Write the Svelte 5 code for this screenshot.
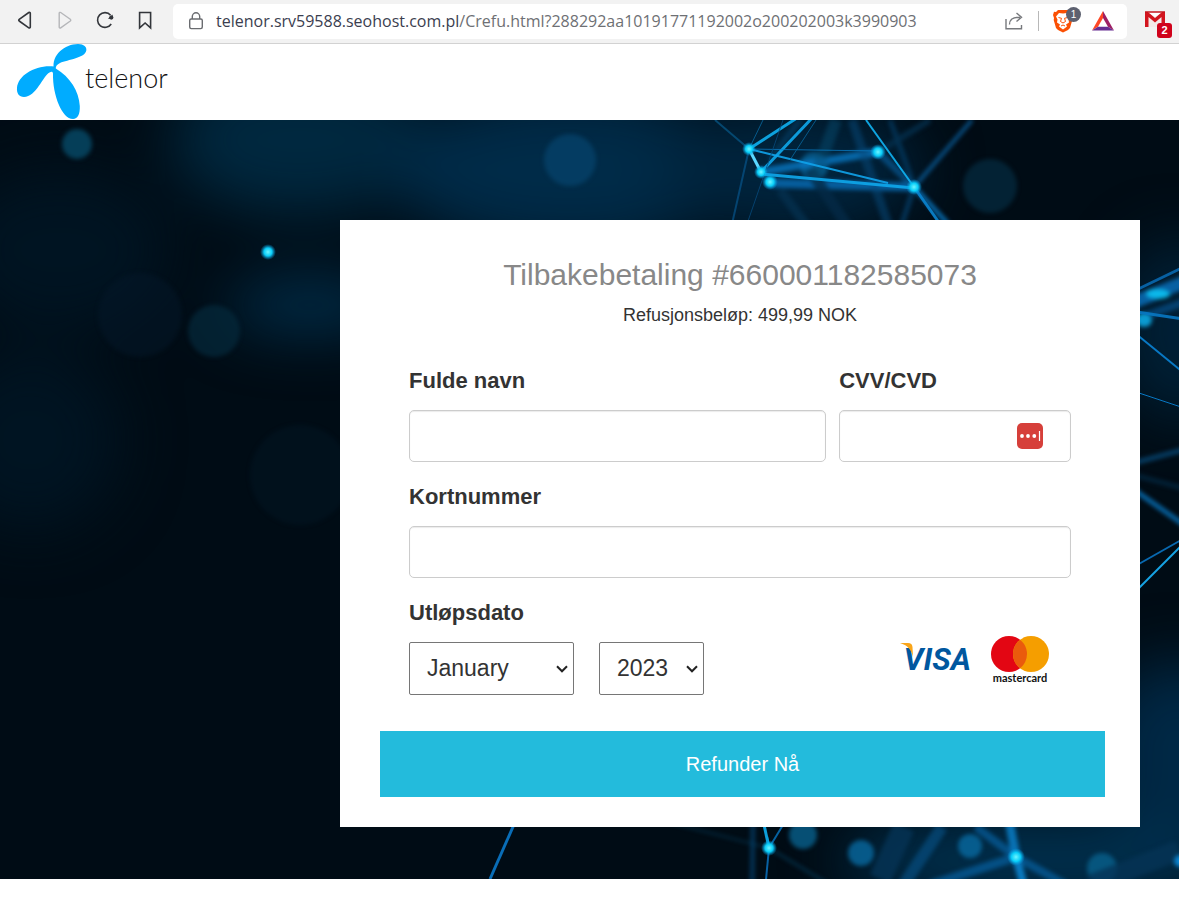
<script>
  const months = ['January', 'February', 'March', 'April', 'May', 'June', 'July', 'August', 'September', 'October', 'November', 'December'];
  const years = [2023, 2024, 2025, 2026, 2027, 2028];

  let month = 'January';
  let year = 2023;

  // x1, y1, x2, y2, width, colour, opacity
  const softLines = [
    [761, 52, 878, 32, 8, '#0878c4', 0.8],
    [770, 63, 914, 67, 9, '#0869b0', 0.85],
    [878, 32, 914, 67, 7, '#075a96', 0.7],
    [852, 0, 890, 110, 9, '#064a7c', 0.5],
    [890, 0, 912, 60, 5, '#075a96', 0.4],
    [914, 67, 972, 0, 4, '#0a6ab0', 0.7],
    [914, 67, 900, 110, 5, '#064a7c', 0.6],
    [914, 67, 948, 104, 5, '#0878c4', 0.8],
    [878, 32, 930, 0, 6, '#04304e', 0.8],
    [780, 70, 810, 110, 9, '#04304e', 0.8],
    [810, 50, 850, 110, 11, '#042a46', 0.8],
    [770, 40, 800, 0, 6, '#053c62', 0.7],
    [814, 60, 836, 0, 12, '#064a6e', 0.5],
    [1134, 182, 1190, 160, 13, '#0869b0', 0.9],
    [1140, 198, 1190, 180, 8, '#06508a', 0.7],
    [1130, 344, 1190, 328, 5, '#053c62', 1],
    [1130, 367, 1190, 409, 5, '#0878c4', 0.8],
    [1130, 354, 1190, 370, 5, '#04304e', 0.6],
    [753, 700, 752, 770, 5, '#064a7c', 0.6],
    [904, 707, 880, 759, 22, '#053456', 0.8],
    [942, 707, 900, 770, 12, '#07548a', 0.6],
    [1016, 737, 930, 765, 9, '#0869b0', 0.6],
    [1016, 737, 976, 707, 8, '#0869b0', 0.6],
    [1016, 737, 1066, 765, 8, '#0869b0', 0.6],
    [1016, 737, 1009, 700, 9, '#0a84d0', 0.8],
    [1016, 737, 1025, 770, 8, '#0a84d0', 0.9],
    [1090, 765, 1179, 730, 20, '#053456', 0.8],
    [660, 700, 769, 728, 2, '#064a6e', 0.5],
    [769, 728, 830, 765, 3, '#064a6e', 0.5]
  ];

  const sharpLines = [
    [749, 29, 800, -4, 3, '#0fb0f0', 0.9],
    [761, 52, 814, -4, 3, '#0fa8ec', 0.9],
    [761, 52, 749, 29, 3, '#5ad8ff', 1],
    [749, 29, 878, 31, 1, '#0a84d0', 0.7],
    [749, 29, 888, 63, 2, '#10a4ec', 0.9],
    [761, 54, 914, 68, 3, '#0fa8ec', 0.9],
    [866, 0, 914, 67, 2, '#10b4f4', 0.9],
    [914, 67, 940, 104, 3, '#0a84d0', 0.9],
    [715, 0, 749, 29, 2, '#075a8a', 0.7],
    [763, 0, 749, 29, 1, '#0869a0', 0.8],
    [749, 29, 732, 104, 2, '#07548a', 0.7],
    [783, 0, 747, 104, 1, '#064a7c', 0.8],
    [816, 0, 790, 40, 1, '#0869a0', 0.8],
    [1130, 173, 1190, 144, 3, '#0869b0', 0.9],
    [1130, 191, 1190, 200, 3, '#0878c4', 0.9],
    [1130, 209, 1190, 258, 2, '#0878c4', 1],
    [1130, 270, 1190, 290, 1, '#0878c4', 1],
    [1130, 449, 1190, 415, 2, '#0869b0', 1],
    [1130, 477, 1190, 417, 2, '#16a4e4', 1],
    [516, 700, 490, 759, 3, '#0a78c8', 0.9],
    [763, 700, 769, 728, 3, '#0fb0f0', 0.9],
    [786, 700, 769, 728, 2, '#0878c4', 0.8],
    [769, 728, 765, 770, 2, '#0a78c8', 0.8]
  ];

  // cx, cy, r, colour, opacity
  const bokeh = [
    [77, 24, 15, '#05445f', 0.9],
    [570, 40, 26, '#05446e', 0.7],
    [140, 195, 42, '#04182a', 0.5],
    [214, 211, 26, '#04293c', 0.7],
    [300, 355, 50, '#031827', 0.4],
    [990, 66, 27, '#04283c', 0.8],
    [814, 46, 14, '#0869a0', 0.7],
    [803, 715, 14, '#07608c', 0.8],
    [861, 733, 13, '#0869a0', 0.8],
    [970, 726, 12, '#0869a0', 0.8],
    [1102, 748, 15, '#07608c', 0.8]
  ];

  const nodes = [
    [749, 29, 5],
    [761, 52, 5],
    [770, 62, 6],
    [878, 32, 6],
    [914, 67, 6],
    [268, 132, 6],
    [769, 728, 6],
    [1016, 737, 7]
  ];
</script>

<div class="toolbar">
  <button class="tool" type="button" aria-label="Back">
    <svg width="20" height="20" viewBox="0 0 20 20"><path d="M15.3 3.2V17c0 .8-.8 1.2-1.5.8L4.2 11c-.6-.5-.6-1.2 0-1.7l9.6-6.8c.7-.4 1.5 0 1.5.7z" fill="none" stroke="#33363b" stroke-width="1.6" /></svg>
  </button>
  <button class="tool" type="button" aria-label="Forward" disabled>
    <svg width="20" height="20" viewBox="0 0 20 20"><path d="M4.2 3.2V17c0 .8.8 1.2 1.5.8l9.6-6.8c.6-.5.6-1.2 0-1.7L5.7 2.5c-.7-.4-1.5 0-1.5.7z" fill="none" stroke="#b5b6b9" stroke-width="1.4" /></svg>
  </button>
  <button class="tool" type="button" aria-label="Reload">
    <svg width="20" height="20" viewBox="0 0 20 20">
      <path d="M16.2 14A7.4 7.4 0 1 1 15.6 5.200" fill="none" stroke="#33363b" stroke-width="1.6" />
      <path d="M17.600 4.500l.3 4.600-5-.3z" fill="#33363b" />
      <circle cx="16.300" cy="7.600" r="2.100" fill="#33363b" />
    </svg>
  </button>
  <button class="tool" type="button" aria-label="Bookmark">
    <svg width="20" height="20" viewBox="0 0 20 20"><path d="M4.600 2.500h11v15.400L10.100 13l-5.500 4.900z" fill="none" stroke="#33363b" stroke-width="1.6" /></svg>
  </button>

  <div class="address">
    <svg class="lock" width="16" height="20" viewBox="0 0 16 20"><rect x="1.700" y="8" width="12.600" height="9.600" rx="1.500" fill="none" stroke="#6a6c70" stroke-width="1.400" /><path d="M4.300 8V5.500a3.700 3.700 0 0 1 7.400 0V8" fill="none" stroke="#6a6c70" stroke-width="1.400" /></svg>
    <span class="url"><b>telenor.srv59588.seohost.com.pl</b>/Crefu.html?288292aa10191771192002o200202003k3990903</span>
    <button class="tool" type="button" aria-label="Share">
      <svg width="20" height="20" viewBox="0 0 20 20"><path d="M2 8v9.700h15.500V14M5.500 13.500c0-5 3-7.300 10.500-7.300M12.500 2l5 4.300-5 4.200" fill="none" stroke="#77797d" stroke-width="1.400" /></svg>
    </button>
    <span class="divider"></span>
    <button class="tool shield" type="button" aria-label="Shields">
      <svg width="22" height="24" viewBox="0 0 22 24">
        <path d="M6 1h10l2 2 2-.3L21 6l-1 3 .3 2-2.300 8-2 2L11 23.500 6 21l-2-2-2.300-8L2 9 1 6l1-3.300L4 3z" fill="#fb5004" />
        <path d="M11 4.500l4-.6 3 3.600-1.500 3 .5 3-3 2 1 2-4 3-4-3 1-2-3-2 .5-3L4 7.500l3-3.600z" fill="#fff" />
        <path d="M6.500 8.500l3 .8-1 3.200 2.500 1.500 2.500-1.500-1-3.200 3-.8M9 17l2-1 2 1" fill="none" stroke="#fb5004" stroke-width="1" />
      </svg>
      <span class="count">1</span>
    </button>
    <button class="tool" type="button" aria-label="Rewards">
      <svg width="24" height="22" viewBox="0 0 24 22">
        <path d="M12 1L1 20.500l6-3.800L12 8z" fill="#ff4724" />
        <path d="M12 1l11 19.500-6-3.800L12 8z" fill="#9e1f63" />
        <path d="M1 20.500h22l-6-3.800H7z" fill="#662d91" />
      </svg>
    </button>
  </div>

  <button class="tool mail" type="button" aria-label="Mail">
    <svg width="22" height="18" viewBox="0 0 22 18">
      <path d="M1 1h20v15H1z" fill="#f4e9e8" />
      <path d="M1 16V1h3l7 6 7-6h3v15h-3.500V6L11 11.500 4.500 6v10z" fill="#d2151e" />
      <path d="M4 1h14l-7 5z" fill="#fff" /><path d="M1 1h20" stroke="#c5141c" stroke-width="1.500" />
    </svg>
    <span class="unread">2</span>
  </button>
</div>

<header>
  <svg width="72" height="76" viewBox="0 0 72 76" aria-hidden="true">
    <path d="M38 25C35 11 49 0 62 0c6 0 9 3 8.300 6.500C69 14 52 15.500 44 19c-3 1.300-4.500 3.500-4.200 5.500C54 33 63 47 63.800 62c.3 8-2 13-6.800 13-11 0-20.500-24-20-45.500-.2-2-1.600-2.300-3.500-1C27 32 20 53 8 53c-5 0-7.500-4-7-9C2 31 20 20.500 38 22.500z" fill="#00acff" />
  </svg>
  <span class="wordmark">telenor</span>
</header>

<main>
  <svg class="backdrop" viewBox="0 0 1179 759" preserveAspectRatio="xMidYMid slice" aria-hidden="true">
    <defs>
      <filter id="soft" x="-20" y="-20" width="1219" height="799" filterUnits="userSpaceOnUse" color-interpolation-filters="sRGB"><feGaussianBlur stdDeviation="2" /></filter>
      <filter id="haze" x="-100" y="-100" width="1379" height="959" filterUnits="userSpaceOnUse" color-interpolation-filters="sRGB"><feGaussianBlur stdDeviation="30" /></filter>
      <radialGradient id="spark">
        <stop offset="0" stop-color="#6ff4ff" />
        <stop offset="0.5" stop-color="#08cdf8" />
        <stop offset="1" stop-color="#0892d8" stop-opacity="0" />
      </radialGradient>
    </defs>
    <rect width="1179" height="759" fill="#000c15" />
    <g filter="url(#haze)">
      <ellipse cx="300" cy="20" rx="130" ry="75" fill="#00283f" />
      <ellipse cx="570" cy="50" rx="180" ry="80" fill="#002b48" />
      <ellipse cx="790" cy="50" rx="130" ry="65" fill="#00243d" />
      <ellipse cx="310" cy="185" rx="85" ry="26" fill="#00304e" />
      <ellipse cx="60" cy="130" rx="110" ry="80" fill="#001422" />
      <ellipse cx="30" cy="320" rx="90" ry="90" fill="#001422" />
      <ellipse cx="1179" cy="210" rx="60" ry="90" fill="#002036" />
      <ellipse cx="1179" cy="630" rx="80" ry="90" fill="#002845" />
      <ellipse cx="1040" cy="740" rx="200" ry="45" fill="#00304e" />
    </g>
    <g filter="url(#soft)">
      {#each bokeh as [cx, cy, r, fill, opacity]}
        <circle {cx} {cy} {r} {fill} {opacity} />
      {/each}
      {#each softLines as [x1, y1, x2, y2, width, stroke, opacity]}
        <line {x1} {y1} {x2} {y2} {stroke} {opacity} stroke-width={width} />
      {/each}
      <ellipse cx="1158" cy="174" rx="12" ry="5" fill="#0bb8ea" />
      <ellipse cx="1144" cy="200" rx="8" ry="7" fill="#0a9ad0" />
      <circle cx="1180" cy="741" r="6" fill="#0a84d0" />
    </g>
    {#each sharpLines as [x1, y1, x2, y2, width, stroke, opacity]}
      <line {x1} {y1} {x2} {y2} {stroke} {opacity} stroke-width={width} />
    {/each}
    {#each nodes as [cx, cy, r]}
      <circle {cx} {cy} r={r + 2} fill="url(#spark)" />
    {/each}
  </svg>

  <form class="card" on:submit|preventDefault>
    <h1>Tilbakebetaling #660001182585073</h1>
    <p>Refusjonsbeløp: 499,99 NOK</p>

    <div class="fields">
      <div class="field">
        <label for="name">Fulde navn</label>
        <input id="name" type="text" autocomplete="off" />
      </div>
      <div class="field">
        <label for="code">CVV/CVD</label>
        <div class="with-icon">
          <input id="code" type="text" autocomplete="off" />
          <svg width="26" height="26" viewBox="0 0 26 26" aria-hidden="true">
            <rect width="26" height="26" rx="5" fill="#d63f3a" />
            <circle cx="5" cy="13" r="1.900" fill="#fff" /><circle cx="11" cy="13" r="1.900" fill="#fff" /><circle cx="17.300" cy="13" r="1.900" fill="#fff" />
            <path d="M22.500 8v10" stroke="#fff" stroke-width="1.200" />
          </svg>
        </div>
      </div>
      <div class="field wide">
        <label for="number">Kortnummer</label>
        <input id="number" type="text" autocomplete="off" />
      </div>
      <div class="field wide">
        <label for="month">Utløpsdato</label>
        <div class="expiry">
          <div class="picker month">
            <select id="month" bind:value={month}>
              {#each months as m}
                <option>{m}</option>
              {/each}
            </select>
            <svg width="12" height="8" viewBox="0 0 12 8"><path d="M1 1.300l5 5 5-5" fill="none" stroke="#222" stroke-width="2" /></svg>
          </div>
          <div class="picker year">
            <select aria-label="Year" bind:value={year}>
              {#each years as y}
                <option value={y}>{y}</option>
              {/each}
            </select>
            <svg width="12" height="8" viewBox="0 0 12 8"><path d="M1 1.300l5 5 5-5" fill="none" stroke="#222" stroke-width="2" /></svg>
          </div>
          <div class="brands">
            <div class="visa">
              <span>VISA</span>
              <svg width="14" height="15" viewBox="0 0 14 15" aria-hidden="true"><path d="M0 0h8c3 0 4 1 4.500 4L13 14C11 6 7 2 0 0z" fill="#f9a51a" /></svg>
            </div>
            <div class="mastercard">
              <svg width="58" height="36" viewBox="0 0 58 36" aria-hidden="true">
                <circle cx="18" cy="18" r="18" fill="#e30613" />
                <circle cx="40" cy="18" r="18" fill="#f59e00" />
                <path d="M29 3.750a18 18 0 0 1 0 28.500 18 18 0 0 1 0-28.500z" fill="#ea5b0c" />
              </svg>
              <span>mastercard</span>
            </div>
          </div>
        </div>
      </div>
    </div>

    <button class="submit" type="button">Refunder Nå</button>
  </form>
</main>

<style>
  :global(body) {
    background: #fff;
    font-family: "Liberation Sans", Arial, sans-serif;
    color: #333;
  }

  .toolbar {
    display: flex;
    align-items: center;
    height: 40px;
    padding: 0 4px 3px 5px;
    background: #f2f2f2;
    border-bottom: 1px solid #d2d2d2;
  }

  .tool {
    display: flex;
    flex: none;
    align-items: center;
    justify-content: center;
    width: 40px;
    padding: 0;
    border: 0;
    background: none;
  }

  .address {
    display: flex;
    flex: 1;
    align-items: center;
    box-sizing: border-box;
    min-width: 0;
    height: 35px;
    margin: 2px 8px 0 8px;
    padding: 0 4px 0 15px;
    border-radius: 5px;
    background: #fff;
  }

  .lock {
    flex: none;
    margin-right: 12px;
  }

  .url {
    flex: 1;
    overflow: hidden;
    font-family: "Open Sans", "Noto Sans", sans-serif;
    font-size: 16px;
    white-space: nowrap;
    color: #6e7074;
  }

  .url b {
    font-weight: 400;
    color: #3b3e4f;
  }

  .divider {
    width: 1px;
    height: 20px;
    margin: 0 4px;
    background: #b8b8b8;
  }

  .shield {
    position: relative;
  }

  .count {
    position: absolute;
    top: -2px;
    right: 2px;
    width: 15px;
    border-radius: 8px;
    background: #5d6170;
    color: #fff;
    font-size: 10px;
    line-height: 15px;
  }

  .mail {
    position: relative;
  }

  .unread {
    position: absolute;
    right: 3px;
    bottom: -9px;
    width: 15px;
    border-radius: 3px;
    background: #d0021b;
    color: #fff;
    font-size: 11px;
    font-weight: 700;
    line-height: 15px;
  }

  header {
    display: flex;
    align-items: center;
    height: 76px;
    padding-left: 16px;
  }

  .wordmark {
    margin-left: -3px;
    font-family: Lato, sans-serif;
    font-size: 27px;
    font-weight: 300;
    line-height: 32px;
    padding-bottom: 8px;
    color: #111;
  }

  main {
    position: relative;
    overflow: hidden;
    padding: 100px 39px 52px;
    background: #000c15;
  }

  .backdrop {
    position: absolute;
    inset: 0;
    width: 100%;
    height: 100%;
  }

  .card {
    position: relative;
    box-sizing: border-box;
    max-width: 800px;
    margin-left: auto;
    padding: 38px 35px 30px 40px;
    background: #fff;
  }

  h1 {
    margin: 0 0 11px;
    padding-right: 5px;
    font-size: 30px;
    font-weight: 400;
    line-height: 33px;
    text-align: center;
    color: #888;
  }

  p {
    margin: 0 0 37px;
    padding-right: 5px;
    font-size: 18px;
    line-height: 26px;
    text-align: center;
  }

  .fields {
    display: grid;
    grid-template-columns: 9fr 5fr;
    gap: 19px 13px;
    margin: 0 34px 36px 29px;
  }

  .wide {
    grid-column: 1 / -1;
  }

  label {
    display: block;
    margin-bottom: 13px;
    font-size: 22px;
    font-weight: 700;
    line-height: 32px;
  }

  input {
    display: block;
    box-sizing: border-box;
    width: 100%;
    height: 52px;
    padding: 0 18px;
    border: 1px solid #ccc;
    border-radius: 5px;
    box-shadow: inset 0 1px 1px rgba(0, 0, 0, 0.08);
    background: #fff;
    font: inherit;
    font-size: 22px;
  }

  .with-icon {
    position: relative;
  }

  .with-icon svg {
    position: absolute;
    top: 13px;
    right: 28px;
  }

  .expiry {
    display: flex;
    align-items: center;
  }

  .picker {
    position: relative;
    margin-right: 25px;
  }

  .month {
    width: 165px;
  }

  .year {
    width: 105px;
  }

  select {
    display: block;
    width: 100%;
    height: 53px;
    padding: 0 17px 2px;
    border: 1px solid #767676;
    border-radius: 2px;
    appearance: none;
    background: #fff;
    font: inherit;
    font-size: 23px;
    color: #333;
  }

  .picker svg {
    position: absolute;
    top: 23px;
    right: 6px;
    pointer-events: none;
  }

  .brands {
    display: flex;
    align-items: center;
    gap: 20px;
    margin: -18px 22px 0 auto;
  }

  .brands svg {
    display: block;
  }

  .visa {
    position: relative;
    font-family: Roboto, "Liberation Sans", sans-serif;
    font-size: 31px;
    font-style: italic;
    font-weight: 700;
    line-height: 40px;
    color: #00579f;
  }

  .visa svg {
    position: absolute;
    top: 3px;
    left: -4px;
  }

  .mastercard {
    display: flex;
    flex-direction: column;
    align-items: center;
    width: 58px;
  }

  .mastercard span {
    font-family: Lato, sans-serif;
    font-size: 11px;
    font-weight: 700;
    line-height: 12px;
    color: #111;
  }

  .submit {
    display: block;
    width: 100%;
    height: 66px;
    padding: 0;
    border: 0;
    background: #23bbdc;
    color: #fff;
    font: inherit;
    font-size: 20px;
  }
</style>
